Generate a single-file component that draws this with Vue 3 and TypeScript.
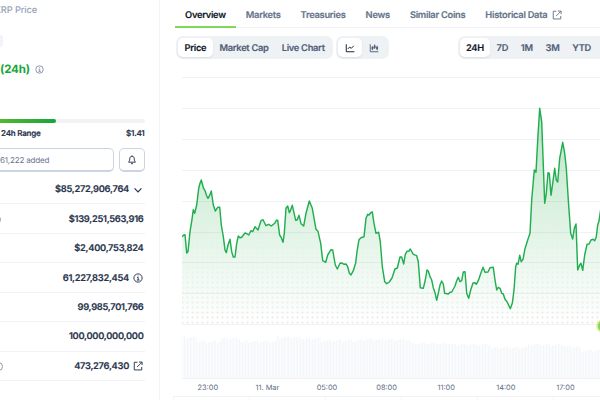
<script setup lang="ts">
interface Stat { value: string; icon?: 'chevron' | 'info' | 'external'; hint?: 'far' | 'near' }
interface Trace { x: number; y: number; points: string }

const stats: Stat[] = [
  { value: '$85,272,906,764', icon: 'chevron' },
  { value: '$139,251,563,916', hint: 'far' },
  { value: '$2,400,753,824' },
  { value: '61,227,832,454', icon: 'info' },
  { value: '99,985,701,766' },
  { value: '100,000,000,000' },
  { value: '473,276,430', icon: 'external', hint: 'near' },
]
const tabs = ['Overview', 'Markets', 'Treasuries', 'News', 'Similar Coins', 'Historical Data']
const metrics = ['Price', 'Market Cap', 'Live Chart']
const ranges = ['24H', '7D', '1M', '3M', 'YTD']
const times = ['23:00', '11. Mar', '05:00', '08:00', '11:00', '14:00', '17:00']
const gridLines = [77.5, 108.5, 139.5, 170.5, 201.5, 232.5, 262.5, 293.5, 324.5]

// Price samples, in thirds of a pixel from each section's origin.
const traces: Trace[] = [
  { x: 175, y: 160, points: '22,230 26,225 30,224 35,279 39,275 45,215 51,178 55,149 59,160 65,135 71,85 75,70 79,60 85,83 91,94 94,105 99,115 105,104 109,93 115,135 121,153 128,142 134,142 139,195 145,230 150,270 154,278 159,255 165,238 170,275 175,291 180,291 185,250 190,228 195,233 200,232 210,219 215,221 221,225 228,212 233,215 240,200 249,210 258,182 264,179 273,197 281,193 289,198 300,189 304,181 308,181 314,226 318,231 324,247 328,220 333,145 338,138 343,158' },
  { x: 290, y: 180, points: '0,95 7,76 17,121 22,119 27,106 33,131 41,138 48,100 58,63 67,85 78,148 84,154 92,190 98,242 107,247 113,225 123,209 128,210 136,255 142,267 150,250 156,249 162,253 168,252 173,260 178,279 183,285 190,272 197,248 201,215 207,179 213,173 222,170 228,115 233,103 237,105 242,98 247,96 252,130 258,160 266,157 271,185 277,260 284,305 290,311 298,306 306,294 315,267 322,264' },
  { x: 400, y: 220, points: '0,111 5,111 11,132 16,103 21,94 27,93 31,87 40,103 50,107 55,125 61,203 70,205 76,180 81,150 85,153 90,170 95,180 100,203 105,218 110,241 115,220 120,195 125,183 130,192 134,220 145,222 150,217 155,216 165,198 170,182 175,172 180,185 185,182 190,156 195,155 200,220 206,235 212,210 219,189 225,188 229,193 235,182 243,158 249,142 255,157 264,156 270,143 280,142 285,180 290,210 295,202 300,205 305,220 310,222 315,238 321,245 331,266 337,250 342,210' },
  { x: 500, y: 90, points: '47,530 50,520 54,523 59,496 64,515 69,508 75,476 83,450 90,430 95,330 103,240 108,247 113,150 119,55 125,95 134,340 139,310 144,248 148,250 153,316 158,280 164,235 169,270 173,276 179,205 188,157 194,190 199,235 205,330 212,430 218,447 223,415 228,402 233,540 239,525 243,520 248,541 254,495 261,463 267,462 273,450 279,448 284,452 289,440 293,405 297,393 303,352' },
]
const line = 'M' + traces.flatMap(t => t.points.split(' ').map(p => {
  const [x, y] = p.split(',').map(Number)
  return `${(t.x + x / 3 - 160).toFixed(1)},${(t.y + y / 3 - 70).toFixed(1)}`
})).join('L')
const area = `${line}V254H22Z`

const levels: [number, number][] = [[182, 337], [197, 341], [220, 338], [240, 341], [276, 337], [302, 338], [320, 340], [360, 339], [410, 343], [450, 344], [490, 347], [528, 344], [563, 346], [580, 350], [601, 350]]
const bars = Array.from({ length: 281 }, (_, i) => {
  const x = 182.5 + i * 1.49
  const level = levels.filter(l => l[0] <= x).pop()![1]
  const top = level + [0, 1, 0, 2, 0.5, -1, 1][(i * 5) % 7]
  return { x: x - 160, y: top - 70, h: 378.5 - top }
})
</script>

<template>
  <div class="page">
    <aside class="side">
      <div class="crumb">XRP Price</div>
      <div class="rank"></div>
      <div class="change">
        <span>(24h)</span>
        <svg class="ic-info" viewBox="0 0 16 16"><circle cx="8" cy="8" r="6.6" /><path d="M6.5 7.2h1.8v4M6 11.3h4.4M8 4.2v1.2" /></svg>
      </div>
      <div class="track"><div class="fill"></div></div>
      <div class="range"><span>24h Range</span><span>$1.41</span></div>
      <div class="actions">
        <div class="added">61,222 added</div>
        <div class="bell"><svg viewBox="0 0 16 16"><path d="M8 2C5.5 2 4.4 3.8 4.4 6.1C4.4 9 3.4 10 2.5 11.5H13.5C12.6 10 11.6 9 11.6 6.1C11.6 3.8 10.5 2 8 2ZM6.4 13.5Q8 15 9.6 13.5M8 .8V2" /></svg></div>
      </div>
      <div class="stats">
        <div v-for="s in stats" :key="s.value" class="stat">
          <i v-if="s.hint" class="hint" :class="s.hint"></i>
          <span>{{ s.value }}</span>
          <svg v-if="s.icon === 'chevron'" class="ic" viewBox="0 0 16 16"><path class="bold" d="M2.5 5.5L8 11L13.5 5.5" /></svg>
          <svg v-if="s.icon === 'info'" class="ic" viewBox="0 0 16 16"><circle cx="8" cy="8" r="6.6" /><path d="M6.5 7.2h1.8v4M6 11.3h4.4M8 4.2v1.2" /></svg>
          <svg v-if="s.icon === 'external'" class="ic" viewBox="0 0 16 16"><path d="M7 2H2V14.3H14V9.5M9.5 1.7H14.5V6.5M14.2 2L6.5 9.7" /></svg>
        </div>
      </div>
    </aside>
    <main class="main">
      <nav class="tabs">
        <div v-for="(t, i) in tabs" :key="t" class="tab" :class="{ active: i === 0 }">
          {{ t }}
          <svg v-if="i === 5" class="ic" viewBox="0 0 16 16"><path d="M7 2H2V14.3H14V9.5M9.5 1.7H14.5V6.5M14.2 2L6.5 9.7" /></svg>
        </div>
      </nav>
      <div class="tools">
        <div class="group metric"><b v-for="(m, i) in metrics" :key="m" :class="{ on: i === 0 }">{{ m }}</b></div>
        <div class="group kinds">
          <b class="on"><svg viewBox="0 0 16 16"><path d="M2 2V14H15M4.5 9.5L7.5 6.5L10 8.5L14 4.5" /></svg></b>
          <b><svg viewBox="0 0 16 16"><path d="M2 2V14H15M5.5 5V11.5M9 2.5V9.5M13 4.5V11.5" /><path class="candle" d="M5.5 6.5V10M9 4V8M13 6V10" /></svg></b>
        </div>
        <div class="group spans"><b v-for="(r, i) in ranges" :key="r" :class="{ on: i === 0 }">{{ r }}</b></div>
      </div>
      <svg class="chart" viewBox="0 0 440 309" width="440" height="309">
        <defs>
          <linearGradient id="fade" gradientUnits="userSpaceOnUse" x1="0" y1="38" x2="0" y2="254">
            <stop offset="0" stop-color="#16a63b" stop-opacity=".3" />
            <stop offset=".55" stop-color="#16a63b" stop-opacity=".13" />
            <stop offset="1" stop-color="#16a63b" stop-opacity="0" />
          </linearGradient>
          <linearGradient id="dotfade" x1="0" y1="0" x2="0" y2="1">
            <stop offset="0" stop-color="#fff" stop-opacity="0" />
            <stop offset=".5" stop-color="#fff" stop-opacity=".35" />
            <stop offset="1" stop-color="#fff" />
          </linearGradient>
          <pattern id="dots" width="5" height="5" patternUnits="userSpaceOnUse"><circle class="dot" cx="2.5" cy="2.5" r="1.1" /></pattern>
          <mask id="dotmask"><rect class="flat" x="22" y="110" width="418" height="144" fill="url(#dotfade)" /></mask>
        </defs>
        <path v-for="y in gridLines" :key="y" class="grid" :d="`M22 ${y - 70}H440`" />
        <path class="flat" :d="area" fill="url(#fade)" />
        <g mask="url(#dotmask)"><path class="flat" :d="area" fill="url(#dots)" /></g>
        <rect v-for="b in bars" :key="b.x" class="bar" :x="b.x" :y="b.y" width="0.85" :height="b.h" />
        <path class="axis" d="M22 308.5H440" />
        <path class="price" :d="line" />
        <circle cx="443" cy="256" r="6" fill="#82d85f" stroke="#e5ec91" stroke-width="1.5" />
      </svg>
      <div class="times"><span v-for="t in times" :key="t">{{ t }}</span></div>
      <div class="navigator"><i v-for="n in 6" :key="n"></i></div>
    </main>
  </div>
</template>

<style>
body { margin: 0; overflow: hidden; background: #fff; }
</style>
<style scoped>
* { box-sizing: border-box; }
.page { display: flex; width: 600px; height: 400px; overflow: hidden; font-family: Inter, sans-serif; color: #27334b; text-rendering: geometricPrecision; }
svg { fill: none; stroke: currentColor; stroke-width: 1.5; flex: none; }
.side { flex: none; width: 160px; height: 400px; border-right: 1px solid #f1f3f6; padding-right: 14.5px; overflow: hidden; }
.crumb { height: 20px; line-height: 21px; margin-left: -5.5px; font-size: 9.3px; font-weight: 500; letter-spacing: -.15px; color: #97a3b7; }
.rank { width: 3px; height: 12px; margin-top: 15px; background: #f1f4f8; border-radius: 0 4px 4px 0; }
.change { display: flex; align-items: center; gap: 5px; height: 22px; margin-top: 11px; font-size: 11.5px; font-weight: 700; letter-spacing: -.15px; color: #16a63b; }
.ic-info { width: 9px; height: 9px; color: #748096; stroke-width: 1.4; }
.track { height: 4px; margin: 39px 0 5px; background: #f2f3f4; border-radius: 0 3px 3px 0; }
.fill { width: 56px; height: 4px; background: linear-gradient(90deg, #52b72e, #16a63b); border-radius: 0 3px 3px 0; }
.range { display: flex; justify-content: space-between; height: 10px; line-height: 10px; padding-left: 1px; font-size: 8px; font-weight: 600; letter-spacing: -.22px; -webkit-text-stroke: .15px currentColor; }
.actions { display: flex; gap: 5px; margin-top: 10px; height: 24px; }
.added { width: 113.5px; line-height: 22px; font-size: 8px; letter-spacing: -.18px; color: #64748b; border: 1px solid #cbd5e1; border-left: 0; border-bottom-width: 2px; border-radius: 0 5px 5px 0; }
.bell { width: 26px; display: flex; align-items: center; justify-content: center; border: 1px solid #cbd5e1; border-bottom-width: 2px; border-radius: 5px; }
.bell svg { width: 10px; height: 10px; }
.stats { margin-top: 3px; }
.stat { position: relative; display: flex; align-items: center; justify-content: flex-end; gap: 4px; height: 29.45px; padding: 1px 1px 0 0; border-bottom: 1px solid #f1f3f6; font-size: 9.3px; font-weight: 600; letter-spacing: -.28px; -webkit-text-stroke: .18px currentColor; }
.stat .ic { margin-right: .5px; }
.ic { width: 10px; height: 10px; }
.bold { stroke-width: 1.9; }
.hint { position: absolute; width: 9px; height: 9px; border: 1px solid #8b9bb1; border-radius: 50%; left: -8px; }
.hint.near { left: -6px; }
.main { flex: none; width: 440px; overflow: hidden; }
.tabs { display: flex; height: 28px; margin-left: 15px; border-bottom: 1px solid #f1f3f6; }
.tab { flex: none; display: flex; gap: 4.5px; align-items: center; height: 28px; padding: 4.5px 10px 0; font-size: 9.3px; font-weight: 600; letter-spacing: -.26px; -webkit-text-stroke: .15px currentColor; color: #64748b; white-space: nowrap; border-bottom: 2px solid transparent; }
.tab.active { color: #0f172a; border-color: #80d85b; }
.tools { display: flex; height: 23px; margin: 8px 0 0 16px; }
.group { display: flex; flex: none; align-items: center; height: 23px; padding: 2px; background: #eff2f5; border-radius: 7px; color: #526077; font-size: 9.3px; letter-spacing: -.29px; -webkit-text-stroke: .15px currentColor; }
.group b { display: flex; align-items: center; justify-content: center; height: 19px; padding: 1px 6.6px 0; font-weight: 600; white-space: nowrap; border-radius: 5px; }
.group .on { background: #fff; color: #0f172a; box-shadow: 0 1px 2px #c9d0da99; }
.group svg { width: 10px; height: 10px; }
.metric { width: 157px; margin-right: 3px; }
.kinds { width: 52.5px; margin-right: 69px; }
.kinds b { width: 24px; padding: 0; }
.spans { width: 150px; }
.spans b { padding: 1px 6.4px 0; }
.candle { stroke-width: 3; }
.chart { display: block; margin-top: 11px; }
.grid, .axis { stroke: #f0f2f4; stroke-width: 1; }
.flat { stroke: none; }
.dot { fill: #e6ebe8; stroke: none; }
.bar { fill: #f2f5f8; stroke: none; }
.price { stroke: #21ae50; stroke-width: 1.45; stroke-linejoin: round; }
.times { display: flex; height: 17px; margin-left: 18px; }
.times span { flex: none; width: 59.6px; text-align: center; line-height: 17px; font-size: 7.4px; color: #5c6b83; }
.navigator { display: flex; height: 5px; margin-left: 13px; border-top: 1px solid #f1f3f6; }
.navigator i { flex: none; width: 76px; border-left: 1px solid #f3f5f7; }
</style>
